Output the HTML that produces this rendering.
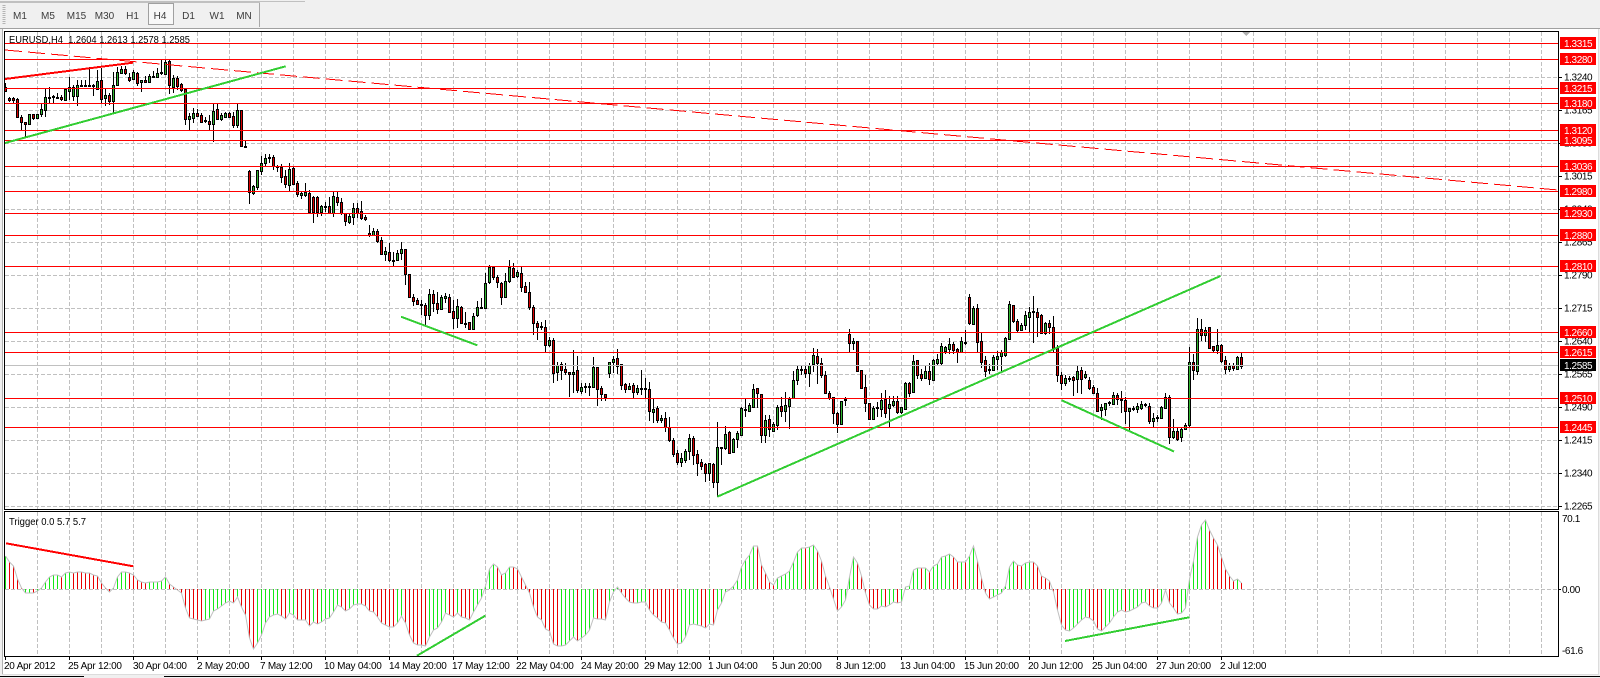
<!DOCTYPE html>
<html><head><meta charset="utf-8"><title>EURUSD,H4</title>
<style>
html,body{margin:0;padding:0;background:#f0f0f0;width:1600px;height:678px;overflow:hidden}
svg{position:absolute;left:0;top:0;display:block;shape-rendering:crispEdges}
text{font-family:"Liberation Sans",sans-serif;font-size:10px;fill:#000}
.t text{fill:#3c3c3c;text-anchor:middle}
.a text{letter-spacing:-.4px}
.l text{fill:#fff;letter-spacing:-.4px}
.b text{letter-spacing:-.25px}
</style></head><body>
<svg width="1600" height="678" viewBox="0 0 1600 678" xmlns="http://www.w3.org/2000/svg">
<rect width="1600" height="678" fill="#f0f0f0"/>
<path d="M0 1.5H305M0 2.5H260" stroke="#c0c0c0" fill="none"/>
<path d="M259.5 3V27" stroke="#a8a8a8" fill="none"/>
<path d="M4 5V24" stroke="#b4b4b4" stroke-width="3" stroke-dasharray="1 1" fill="none"/>
<rect x="148.5" y="3.5" width="25" height="21" fill="#f8f8f8" stroke="#a0a0a0"/>
<g class="t">
<text x="20" y="19">M1</text><text x="48" y="19">M5</text><text x="76.500" y="19">M15</text><text x="104.500" y="19">M30</text><text x="132.500" y="19">H1</text><text x="160" y="19">H4</text><text x="188.500" y="19">D1</text><text x="217" y="19">W1</text><text x="244" y="19">MN</text>
</g>
<rect x="0" y="28" width="1600" height="1" fill="#a0a0a0"/>
<rect x="2" y="29" width="1597" height="646" fill="#fff"/>
<rect x="2" y="29" width="1" height="646" fill="#b0b0b0"/>
<rect x="2" y="674" width="1597" height="1" fill="#dcdcdc"/>
<rect x="1598" y="29" width="1" height="646" fill="#dcdcdc"/>
<path d="M0 676.500H84M164 676.500H1600" stroke="#000" fill="none"/>

<path fill="none" stroke="#c0c0c0" stroke-dasharray="4 2" d="M5 77.500H1558M5 110.500H1558M5 143.500H1558M5 176.500H1558M5 209.500H1558M5 242.500H1558M5 275.500H1558M5 308.500H1558M5 341.500H1558M5 374.500H1558M5 407.500H1558M5 440.500H1558M5 473.500H1558M5 506.500H1558M5 589.500H1558
M37.500 32V509M69.500 32V509M101.500 32V509M133.500 32V509M165.500 32V509M197.500 32V509M229.500 32V509M261.500 32V509M293.500 32V509M325.500 32V509M357.500 32V509M389.500 32V509M421.500 32V509M453.500 32V509M485.500 32V509M517.500 32V509M549.500 32V509M581.500 32V509M613.500 32V509M645.500 32V509M677.500 32V509M709.500 32V509M741.500 32V509M773.500 32V509M805.500 32V509M837.500 32V509M869.500 32V509M901.500 32V509M933.500 32V509M965.500 32V509M997.500 32V509M1029.500 32V509M1061.500 32V509M1093.500 32V509M1125.500 32V509M1157.500 32V509M1189.500 32V509M1221.500 32V509M1253.500 32V509M1285.500 32V509M1317.500 32V509M1349.500 32V509M1381.500 32V509M1413.500 32V509M1445.500 32V509M1477.500 32V509M1509.500 32V509M1541.500 32V509
M37.500 512V656M69.500 512V656M101.500 512V656M133.500 512V656M165.500 512V656M197.500 512V656M229.500 512V656M261.500 512V656M293.500 512V656M325.500 512V656M357.500 512V656M389.500 512V656M421.500 512V656M453.500 512V656M485.500 512V656M517.500 512V656M549.500 512V656M581.500 512V656M613.500 512V656M645.500 512V656M677.500 512V656M709.500 512V656M741.500 512V656M773.500 512V656M805.500 512V656M837.500 512V656M869.500 512V656M901.500 512V656M933.500 512V656M965.500 512V656M997.500 512V656M1029.500 512V656M1061.500 512V656M1093.500 512V656M1125.500 512V656M1157.500 512V656M1189.500 512V656M1221.500 512V656M1253.500 512V656M1285.500 512V656M1317.500 512V656M1349.500 512V656M1381.500 512V656M1413.500 512V656M1445.500 512V656M1477.500 512V656M1509.500 512V656M1541.500 512V656"/>

<path fill="none" stroke="#000" d="M5.500 83V92M9.500 97V102M13.500 97V103M17.500 98V118M21.500 115V130M25.500 122V137M29.500 114V124M33.500 114V120M37.500 114V119M41.500 103V117M45.500 88V117M49.500 87V103M53.500 95V103M57.500 93V99M61.500 95V101M65.500 88V101M69.500 77V100M73.500 85V101M77.500 80V106M81.500 80V87M85.500 80V87M89.500 67V86M93.500 84V96M97.500 70V90M101.500 68V103M105.500 88V106M109.500 93V105M113.500 72V113M117.500 67V86M121.500 66V74M125.500 66V75M129.500 73V82M133.500 70V80M137.500 72V86M141.500 80V92M145.500 76V83M149.500 74V83M153.500 71V78M157.500 68V78M161.500 60V75M165.500 59V75M169.500 59V94M173.500 75V93M177.500 76V90M181.500 83V92M185.500 88V125M189.500 113V130M193.500 108V123M197.500 109V117M201.500 113V123M205.500 117V123M209.500 115V130M213.500 104V142M217.500 104V120M221.500 113V121M225.500 112V117M229.500 112V118M233.500 112V128M237.500 104V128M241.500 110V147M245.500 141V147
M249.500 170V204M253.500 185V195M257.500 170V190M261.500 156V175M265.500 154V166M269.500 154V163M273.500 155V170M277.500 165V172M281.500 164V183M285.500 170V188M289.500 163V191M293.500 166V185M297.500 181V197M301.500 192V199M305.500 183V197M309.500 190V214M313.500 196V223M317.500 196V217M321.500 205V216M325.500 202V212M329.500 197V214M333.500 192V217M337.500 192V206M341.500 198V215M345.500 213V226M349.500 214V224M353.500 203V225M357.500 203V218M361.500 201V220M365.500 215V221M369.500 225V237M373.500 228V236M377.500 229V243M381.500 237V255M385.500 247V261M389.500 243V262M393.500 252V266M397.500 250V261M401.500 242V260M405.500 249V285M409.500 274V298M413.500 294V306M417.500 298V305M421.500 300V315M425.500 303V325M429.500 289V320M433.500 290V312M437.500 292V314M441.500 295V310M445.500 293V303M449.500 294V313M453.500 300V329M457.500 299V328M461.500 306V324M465.500 312V328M469.500 322V330M473.500 313V330M477.500 301V317M481.500 298V308M485.500 273V308M489.500 265V284M493.500 267V280M497.500 275V288M501.500 282V305M505.500 273V298M509.500 260V283M513.500 263V277M517.500 270V278M521.500 267V292M525.500 282V292M529.500 282V310M533.500 305V335M537.500 321V340M541.500 322V330M545.500 320V352M549.500 337V347M553.500 338V383M557.500 362V381M561.500 362V380M565.500 363V375M569.500 372V397M573.500 350V393M577.500 356V393M581.500 383V394M585.500 383V393M589.500 383V396M593.500 357V387M597.500 367V406M601.500 386V401M605.500 394V401M609.500 362V378M613.500 356V373M617.500 349V374
M621.500 364V390M625.500 383V393M629.500 383V390M633.500 383V399M637.500 385V395M641.500 370V395M645.500 378V398M649.500 382V421M653.500 398V423M657.500 406V423M661.500 415V423M665.500 412V432M669.500 417V442M673.500 438V457M677.500 450V465M681.500 453V467M685.500 449V463M689.500 434V460M693.500 436V465M697.500 450V476M701.500 459V470M705.500 463V482M709.500 463V481M713.500 463V488M717.500 422V497M721.500 447V465M725.500 426V450M729.500 431V454M733.500 438V453M737.500 431V448M741.500 407V435M745.500 399V417M749.500 403V412M753.500 384V407M757.500 388V408M761.500 394V443M765.500 415V443M769.500 415V437M773.500 422V431M777.500 405V430M781.500 397V417M785.500 392V422M789.500 397V429M793.500 371V398M797.500 366V385M801.500 366V375M805.500 366V378M809.500 363V387M813.500 348V372M817.500 349V384M821.500 358V378M825.500 371V394M829.500 391V400M833.500 397V424M837.500 412V433M841.500 401V425M845.500 397V406M849.500 329V352M853.500 338V350M857.500 341V372M861.500 370V389M865.500 375V412M869.500 403V420M873.500 406V419M877.500 402V417M881.500 393V417M885.500 390V418M889.500 396V428M893.500 396V407M897.500 396V414
M901.500 407V414M905.500 382V409M909.500 382V397M913.500 355V393M917.500 360V379M921.500 369V381M925.500 365V379M929.500 363V385M933.500 359V381M937.500 354V366M941.500 343V365M945.500 346V354M949.500 338V354M953.500 342V354M957.500 348V363M961.500 337V353M965.500 330V345M969.500 294V325M973.500 306V325M977.500 304V353M981.500 333V368M985.500 356V377M989.500 364V374M993.500 355V370M997.500 351V370M1001.500 350V373M1005.500 337V357M1009.500 301V340M1013.500 305V323M1017.500 319V332M1021.500 323V331M1025.500 311V330M1029.500 307V332M1033.500 296V343M1037.500 308V337M1041.500 314V333M1045.500 322V335M1049.500 320V334M1053.500 316V353M1057.500 345V382M1061.500 372V390M1065.500 375V386M1069.500 376V382M1073.500 376V396M1077.500 366V393M1081.500 367V394M1085.500 371V379M1089.500 377V390M1093.500 385V393M1097.500 388V412M1101.500 404V420M1105.500 403V416M1109.500 401V406M1113.500 392V405M1117.500 393V405M1121.500 391V413M1125.500 397V424M1129.500 408V430M1133.500 406V411M1137.500 403V413M1141.500 401V410M1145.500 403V407M1149.500 403V424M1153.500 413V427M1157.500 415V422M1161.500 406V418M1165.500 393V408M1169.500 395V444M1173.500 419V439M1177.500 428V441M1181.500 427V442M1185.500 423V430M1189.500 347V427M1193.500 354V380M1197.500 318V375M1201.500 319V341M1205.500 327V342M1209.500 327V348M1213.500 346V352M1217.500 329V354M1221.500 344V363M1225.500 356V374M1229.500 363V372M1233.500 363V371M1237.500 356V369M1241.500 353V369"/>

<path fill="#2fb52f" stroke="#000" d="M28.500 114.500h2v10h-2zM36.500 114.500h2v4h-2zM40.500 109.500h2v5h-2zM44.500 97.500h2v13h-2zM48.500 97.500h2v1h-2zM52.500 96.500h2v1h-2zM56.500 97.500h2v1h-2zM64.500 89.500h2v11h-2zM68.500 87.500h2v4h-2zM72.500 87.500h2v9h-2zM76.500 85.500h2v11h-2zM80.500 85.500h2v1h-2zM84.500 85.500h2v1h-2zM88.500 85.500h2v1h-2zM96.500 81.500h2v8h-2zM104.500 95.500h2v3h-2zM112.500 85.500h2v16h-2zM116.500 72.500h2v13h-2zM120.500 69.500h2v4h-2zM132.500 72.500h2v7h-2zM140.500 80.500h2v2h-2zM148.500 76.500h2v6h-2zM152.500 76.500h2v1h-2zM156.500 73.500h2v4h-2zM160.500 72.500h2v1h-2zM164.500 62.500h2v12h-2zM172.500 78.500h2v9h-2zM188.500 116.500h2v3h-2zM192.500 113.500h2v5h-2zM204.500 120.500h2v1h-2zM212.500 111.500h2v13h-2zM220.500 115.500h2v4h-2zM224.500 113.500h2v4h-2zM236.500 110.500h2v15h-2zM244.500 146.500h2v1h-2z
M252.500 186.500h2v7h-2zM256.500 170.500h2v17h-2zM260.500 163.500h2v8h-2zM264.500 158.500h2v5h-2zM268.500 157.500h2v1h-2zM276.500 166.500h2v1h-2zM288.500 169.500h2v16h-2zM300.500 193.500h2v2h-2zM304.500 192.500h2v3h-2zM320.500 206.500h2v6h-2zM324.500 206.500h2v1h-2zM332.500 196.500h2v17h-2zM348.500 216.500h2v6h-2zM352.500 208.500h2v9h-2zM372.500 231.500h2v4h-2zM384.500 251.500h2v3h-2zM392.500 260.500h2v1h-2zM396.500 253.500h2v7h-2zM400.500 249.500h2v4h-2zM428.500 294.500h2v21h-2zM440.500 297.500h2v12h-2zM444.500 296.500h2v2h-2zM456.500 306.500h2v12h-2zM464.500 323.500h2v1h-2zM472.500 316.500h2v13h-2zM476.500 307.500h2v8h-2zM480.500 307.500h2v1h-2zM484.500 283.500h2v25h-2zM488.500 267.500h2v15h-2zM504.500 281.500h2v16h-2zM508.500 267.500h2v14h-2zM516.500 272.500h2v4h-2zM540.500 326.500h2v1h-2zM548.500 340.500h2v5h-2zM556.500 365.500h2v7h-2zM572.500 372.500h2v2h-2zM580.500 387.500h2v4h-2zM584.500 386.500h2v1h-2zM588.500 386.500h2v1h-2zM592.500 367.500h2v20h-2zM608.500 362.500h2v11h-2zM612.500 359.500h2v3h-2z
M628.500 386.500h2v3h-2zM636.500 388.500h2v4h-2zM640.500 388.500h2v1h-2zM644.500 388.500h2v1h-2zM652.500 409.500h2v3h-2zM660.500 418.500h2v2h-2zM680.500 458.500h2v4h-2zM684.500 451.500h2v9h-2zM688.500 438.500h2v13h-2zM708.500 463.500h2v10h-2zM716.500 447.500h2v35h-2zM720.500 447.500h2v1h-2zM724.500 434.500h2v14h-2zM732.500 439.500h2v13h-2zM736.500 433.500h2v6h-2zM740.500 408.500h2v27h-2zM744.500 409.500h2v1h-2zM748.500 405.500h2v6h-2zM752.500 389.500h2v18h-2zM764.500 420.500h2v15h-2zM772.500 424.500h2v7h-2zM776.500 407.500h2v18h-2zM784.500 405.500h2v6h-2zM788.500 399.500h2v7h-2zM792.500 380.500h2v18h-2zM796.500 369.500h2v11h-2zM800.500 369.500h2v1h-2zM808.500 365.500h2v8h-2zM812.500 355.500h2v9h-2zM840.500 401.500h2v23h-2zM844.500 399.500h2v1h-2zM852.500 341.500h2v2h-2zM872.500 408.500h2v11h-2zM876.500 407.500h2v1h-2zM880.500 400.500h2v9h-2zM888.500 404.500h2v4h-2zM892.500 401.500h2v4h-2z
M900.500 407.500h2v5h-2zM904.500 383.500h2v26h-2zM912.500 361.500h2v31h-2zM924.500 371.500h2v7h-2zM932.500 360.500h2v20h-2zM936.500 359.500h2v4h-2zM940.500 346.500h2v17h-2zM944.500 347.500h2v4h-2zM948.500 344.500h2v5h-2zM960.500 341.500h2v11h-2zM964.500 342.500h2v1h-2zM972.500 308.500h2v16h-2zM988.500 369.500h2v1h-2zM992.500 357.500h2v13h-2zM996.500 356.500h2v3h-2zM1000.500 352.500h2v4h-2zM1004.500 338.500h2v17h-2zM1008.500 304.500h2v35h-2zM1020.500 325.500h2v5h-2zM1024.500 315.500h2v10h-2zM1028.500 312.500h2v5h-2zM1032.500 311.500h2v1h-2zM1044.500 323.500h2v10h-2zM1064.500 378.500h2v5h-2zM1068.500 378.500h2v1h-2zM1076.500 371.500h2v8h-2zM1084.500 374.500h2v3h-2zM1100.500 407.500h2v3h-2zM1104.500 403.500h2v6h-2zM1108.500 402.500h2v1h-2zM1112.500 395.500h2v9h-2zM1128.500 408.500h2v3h-2zM1132.500 408.500h2v1h-2zM1136.500 406.500h2v3h-2zM1140.500 404.500h2v4h-2zM1144.500 404.500h2v1h-2zM1152.500 418.500h2v3h-2zM1156.500 417.500h2v1h-2zM1160.500 407.500h2v11h-2zM1164.500 397.500h2v11h-2zM1172.500 431.500h2v6h-2zM1180.500 429.500h2v8h-2zM1184.500 425.500h2v4h-2zM1188.500 362.500h2v63h-2zM1196.500 329.500h2v42h-2zM1204.500 330.500h2v5h-2zM1216.500 345.500h2v5h-2zM1228.500 366.500h2v3h-2zM1236.500 357.500h2v12h-2z"/>

<path fill="#d80000" stroke="#000" d="M4.500 87.500h2v4h-2zM8.500 98.500h2v2h-2zM12.500 98.500h2v2h-2zM16.500 99.500h2v18h-2zM20.500 117.500h2v5h-2zM24.500 122.500h2v2h-2zM32.500 114.500h2v4h-2zM60.500 97.500h2v2h-2zM92.500 85.500h2v1h-2zM100.500 80.500h2v19h-2zM108.500 95.500h2v6h-2zM124.500 69.500h2v4h-2zM128.500 77.500h2v3h-2zM136.500 73.500h2v10h-2zM144.500 80.500h2v2h-2zM168.500 61.500h2v24h-2zM176.500 78.500h2v8h-2zM180.500 84.500h2v6h-2zM184.500 89.500h2v30h-2zM196.500 113.500h2v3h-2zM200.500 115.500h2v7h-2zM208.500 121.500h2v3h-2zM216.500 109.500h2v10h-2zM228.500 113.500h2v4h-2zM232.500 116.500h2v9h-2zM240.500 110.500h2v36h-2z
M248.500 171.500h2v21h-2zM272.500 157.500h2v9h-2zM280.500 167.500h2v10h-2zM284.500 176.500h2v8h-2zM292.500 168.500h2v16h-2zM296.500 183.500h2v11h-2zM308.500 193.500h2v19h-2zM312.500 197.500h2v15h-2zM316.500 197.500h2v15h-2zM328.500 206.500h2v7h-2zM336.500 197.500h2v5h-2zM340.500 202.500h2v11h-2zM344.500 213.500h2v8h-2zM356.500 208.500h2v5h-2zM360.500 211.500h2v7h-2zM364.500 217.500h2v2h-2zM368.500 233.500h2v2h-2zM376.500 231.500h2v10h-2zM380.500 240.500h2v14h-2zM388.500 252.500h2v8h-2zM404.500 249.500h2v25h-2zM408.500 274.500h2v23h-2zM412.500 297.500h2v4h-2zM416.500 300.500h2v4h-2zM420.500 304.500h2v1h-2zM424.500 305.500h2v10h-2zM432.500 294.500h2v9h-2zM436.500 303.500h2v6h-2zM448.500 297.500h2v15h-2zM452.500 311.500h2v7h-2zM460.500 307.500h2v16h-2zM468.500 322.500h2v7h-2zM492.500 267.500h2v10h-2zM496.500 277.500h2v5h-2zM500.500 283.500h2v14h-2zM512.500 268.500h2v9h-2zM520.500 273.500h2v14h-2zM524.500 286.500h2v6h-2zM528.500 292.500h2v15h-2zM532.500 307.500h2v16h-2zM536.500 323.500h2v4h-2zM544.500 327.500h2v18h-2zM552.500 340.500h2v33h-2zM560.500 364.500h2v6h-2zM564.500 369.500h2v3h-2zM568.500 372.500h2v2h-2zM576.500 370.500h2v20h-2zM596.500 367.500h2v22h-2zM600.500 388.500h2v6h-2zM604.500 394.500h2v3h-2zM616.500 358.500h2v8h-2z
M620.500 364.500h2v21h-2zM624.500 384.500h2v5h-2zM632.500 385.500h2v7h-2zM648.500 389.500h2v22h-2zM656.500 408.500h2v12h-2zM664.500 418.500h2v9h-2zM668.500 427.500h2v13h-2zM672.500 440.500h2v14h-2zM676.500 453.500h2v9h-2zM692.500 438.500h2v17h-2zM696.500 454.500h2v9h-2zM700.500 462.500h2v4h-2zM704.500 464.500h2v9h-2zM712.500 464.500h2v18h-2zM728.500 432.500h2v21h-2zM756.500 388.500h2v5h-2zM760.500 394.500h2v41h-2zM768.500 419.500h2v10h-2zM780.500 406.500h2v5h-2zM804.500 369.500h2v4h-2zM816.500 356.500h2v7h-2zM820.500 363.500h2v12h-2zM824.500 375.500h2v18h-2zM828.500 393.500h2v5h-2zM832.500 397.500h2v16h-2zM836.500 413.500h2v11h-2zM848.500 334.500h2v9h-2zM856.500 341.500h2v30h-2zM860.500 370.500h2v18h-2zM864.500 387.500h2v16h-2zM868.500 403.500h2v16h-2zM884.500 399.500h2v14h-2zM896.500 401.500h2v11h-2z
M908.500 383.500h2v10h-2zM916.500 360.500h2v15h-2zM920.500 374.500h2v4h-2zM928.500 371.500h2v8h-2zM952.500 344.500h2v6h-2zM956.500 349.500h2v3h-2zM968.500 297.500h2v26h-2zM976.500 308.500h2v34h-2zM980.500 341.500h2v21h-2zM984.500 360.500h2v11h-2zM1012.500 305.500h2v16h-2zM1016.500 321.500h2v9h-2zM1036.500 312.500h2v5h-2zM1040.500 315.500h2v18h-2zM1048.500 323.500h2v4h-2zM1052.500 327.500h2v21h-2zM1056.500 348.500h2v27h-2zM1060.500 375.500h2v8h-2zM1072.500 377.500h2v3h-2zM1080.500 370.500h2v9h-2zM1088.500 380.500h2v8h-2zM1092.500 387.500h2v6h-2zM1096.500 393.500h2v18h-2zM1116.500 395.500h2v4h-2zM1120.500 399.500h2v1h-2zM1124.500 400.500h2v11h-2zM1148.500 406.500h2v15h-2zM1168.500 397.500h2v40h-2zM1176.500 431.500h2v8h-2zM1192.500 362.500h2v8h-2zM1200.500 329.500h2v6h-2zM1208.500 327.500h2v21h-2zM1212.500 346.500h2v4h-2zM1220.500 345.500h2v16h-2zM1224.500 360.500h2v9h-2zM1232.500 365.500h2v3h-2zM1240.500 357.500h2v9h-2z"/>

<path fill="none" stroke="#16e816" d="M5.500 589V556M25.500 589V593M29.500 589V593M37.500 589V591M41.500 589V588M45.500 589V582M49.500 589V577M53.500 589V575M57.500 589V575M65.500 589V573M69.500 589V572M113.500 589V588M117.500 589V577M121.500 589V572M125.500 589V572M149.500 589V582M153.500 589V582M157.500 589V582M161.500 589V581M165.500 589V577M205.500 589V620M209.500 589V619M213.500 589V611M217.500 589V609M221.500 589V606M225.500 589V603M229.500 589V601M237.500 589V597M257.500 589V643M261.500 589V635M265.500 589V623M269.500 589V617M273.500 589V615M277.500 589V614M289.500 589V613M293.500 589V615M313.500 589V622M321.500 589V622M325.500 589V619M329.500 589V618M333.500 589V612M337.500 589V605M349.500 589V609M353.500 589V605M357.500 589V604M397.500 589V623M401.500 589V616M429.500 589V637M433.500 589V630M437.500 589V628M441.500 589V622M445.500 589V613M457.500 589V613M473.500 589V612M477.500 589V605M481.500 589V598M485.500 589V586M489.500 589V569M493.500 589V564M505.500 589V573M509.500 589V567M561.500 589V646M565.500 589V645M569.500 589V641M573.500 589V637M581.500 589V638M585.500 589V635M589.500 589V630M593.500 589V618M609.500 589V602M613.500 589V592M617.500 589V587M637.500 589V603M641.500 589V602M645.500 589V602M681.500 589V643M685.500 589V637M689.500 589V625M693.500 589V624M697.500 589V625M709.500 589V624M717.500 589V610M721.500 589V603M725.500 589V592M733.500 589V586M737.500 589V580M741.500 589V567M745.500 589V560M749.500 589V555M753.500 589V546M777.500 589V578M781.500 589V576M785.500 589V574M789.500 589V571M793.500 589V562M797.500 589V552M801.500 589V548M809.500 589V547M813.500 589V545M841.500 589V607M845.500 589V600M849.500 589V577M853.500 589V557M881.500 589V606M889.500 589V605M893.500 589V602M901.500 589V602M905.500 589V587M909.500 589V586M913.500 589V570M917.500 589V568M925.500 589V568M933.500 589V566M937.500 589V564M941.500 589V557M945.500 589V556M949.500 589V554M961.500 589V562M969.500 589V556M973.500 589V546M993.500 589V597M997.500 589V595M1001.500 589V593M1005.500 589V586M1009.500 589V567M1013.500 589V561M1025.500 589V563M1029.500 589V562M1069.500 589V631M1073.500 589V628M1077.500 589V624M1081.500 589V620M1085.500 589V617M1105.500 589V627M1109.500 589V623M1113.500 589V617M1117.500 589V612M1121.500 589V610M1129.500 589V611M1133.500 589V609M1137.500 589V607M1141.500 589V603M1145.500 589V602M1161.500 589V603M1165.500 589V590M1181.500 589V613M1185.500 589V608M1189.500 589V579M1193.500 589V561M1197.500 589V537M1201.500 589V525M1205.500 589V520M1237.500 589V579"/>

<path fill="none" stroke="#e80000" d="M9.500 589V562M13.500 589V566M17.500 589V579M21.500 589V588M33.500 589V593M61.500 589V577M73.500 589V573M77.500 589V572M81.500 589V572M85.500 589V573M89.500 589V573M93.500 589V575M97.500 589V576M101.500 589V583M105.500 589V588M109.500 589V592M129.500 589V573M133.500 589V575M137.500 589V580M141.500 589V582M145.500 589V583M169.500 589V584M173.500 589V587M177.500 589V590M181.500 589V593M185.500 589V608M189.500 589V618M193.500 589V619M197.500 589V620M201.500 589V621M233.500 589V603M241.500 589V607M245.500 589V615M249.500 589V638M253.500 589V649M281.500 589V616M285.500 589V619M297.500 589V620M301.500 589V620M305.500 589V620M309.500 589V626M317.500 589V624M341.500 589V607M345.500 589V611M361.500 589V604M365.500 589V606M369.500 589V611M373.500 589V612M377.500 589V617M381.500 589V623M385.500 589V625M389.500 589V627M393.500 589V627M405.500 589V623M409.500 589V635M413.500 589V643M417.500 589V645M421.500 589V645M425.500 589V646M449.500 589V615M453.500 589V617M461.500 589V617M465.500 589V618M469.500 589V620M497.500 589V567M501.500 589V575M513.500 589V567M517.500 589V569M521.500 589V577M525.500 589V585M529.500 589V593M533.500 589V607M537.500 589V617M541.500 589V620M545.500 589V629M549.500 589V631M553.500 589V644M557.500 589V646M577.500 589V641M597.500 589V619M601.500 589V619M605.500 589V620M621.500 589V593M625.500 589V598M629.500 589V602M633.500 589V603M649.500 589V610M653.500 589V615M657.500 589V618M661.500 589V622M665.500 589V623M669.500 589V630M673.500 589V638M677.500 589V644M701.500 589V626M705.500 589V628M713.500 589V625M729.500 589V590M757.500 589V546M761.500 589V565M765.500 589V573M769.500 589V582M773.500 589V585M805.500 589V548M817.500 589V551M821.500 589V561M825.500 589V576M829.500 589V587M833.500 589V599M837.500 589V611M857.500 589V563M861.500 589V576M865.500 589V593M869.500 589V605M873.500 589V609M877.500 589V609M885.500 589V607M897.500 589V603M921.500 589V568M929.500 589V572M953.500 589V557M957.500 589V562M965.500 589V562M977.500 589V561M981.500 589V578M985.500 589V593M989.500 589V599M1017.500 589V565M1021.500 589V566M1033.500 589V562M1037.500 589V566M1041.500 589V576M1045.500 589V578M1049.500 589V581M1053.500 589V592M1057.500 589V610M1061.500 589V625M1065.500 589V630M1089.500 589V618M1093.500 589V621M1097.500 589V629M1101.500 589V631M1125.500 589V612M1149.500 589V606M1153.500 589V608M1157.500 589V608M1169.500 589V603M1173.500 589V608M1177.500 589V614M1209.500 589V530M1213.500 589V538M1217.500 589V545M1221.500 589V557M1225.500 589V569M1229.500 589V576M1233.500 589V581M1241.500 589V583"/>

<polyline fill="none" stroke="#c0c0c0" style="shape-rendering:auto" points="5.500,556 9.500,562 13.500,566 17.500,579 21.500,588 25.500,593 29.500,593 33.500,593 37.500,591 41.500,588 45.500,582 49.500,577 53.500,575 57.500,575 61.500,577 65.500,573 69.500,572 73.500,573 77.500,572 81.500,572 85.500,573 89.500,573 93.500,575 97.500,576 101.500,583 105.500,588 109.500,592 113.500,588 117.500,577 121.500,572 125.500,572 129.500,573 133.500,575 137.500,580 141.500,582 145.500,583 149.500,582 153.500,582 157.500,582 161.500,581 165.500,577 169.500,584 173.500,587 177.500,590 181.500,593 185.500,608 189.500,618 193.500,619 197.500,620 201.500,621 205.500,620 209.500,619 213.500,611 217.500,609 221.500,606 225.500,603 229.500,601 233.500,603 237.500,597 241.500,607 245.500,615 249.500,638 253.500,649 257.500,643 261.500,635 265.500,623 269.500,617 273.500,615 277.500,614 281.500,616 285.500,619 289.500,613 293.500,615 297.500,620 301.500,620 305.500,620 309.500,626 313.500,622 317.500,624 321.500,622 325.500,619 329.500,618 333.500,612 337.500,605 341.500,607 345.500,611 349.500,609 353.500,605 357.500,604 361.500,604 365.500,606 369.500,611 373.500,612 377.500,617 381.500,623 385.500,625 389.500,627 393.500,627 397.500,623 401.500,616 405.500,623 409.500,635 413.500,643 417.500,645 421.500,645 425.500,646 429.500,637 433.500,630 437.500,628 441.500,622 445.500,613 449.500,615 453.500,617 457.500,613 461.500,617 465.500,618 469.500,620 473.500,612 477.500,605 481.500,598 485.500,586 489.500,569 493.500,564 497.500,567 501.500,575 505.500,573 509.500,567 513.500,567 517.500,569 521.500,577 525.500,585 529.500,593 533.500,607 537.500,617 541.500,620 545.500,629 549.500,631 553.500,644 557.500,646 561.500,646 565.500,645 569.500,641 573.500,637 577.500,641 581.500,638 585.500,635 589.500,630 593.500,618 597.500,619 601.500,619 605.500,620 609.500,602 613.500,592 617.500,587 621.500,593 625.500,598 629.500,602 633.500,603 637.500,603 641.500,602 645.500,602 649.500,610 653.500,615 657.500,618 661.500,622 665.500,623 669.500,630 673.500,638 677.500,644 681.500,643 685.500,637 689.500,625 693.500,624 697.500,625 701.500,626 705.500,628 709.500,624 713.500,625 717.500,610 721.500,603 725.500,592 729.500,590 733.500,586 737.500,580 741.500,567 745.500,560 749.500,555 753.500,546 757.500,546 761.500,565 765.500,573 769.500,582 773.500,585 777.500,578 781.500,576 785.500,574 789.500,571 793.500,562 797.500,552 801.500,548 805.500,548 809.500,547 813.500,545 817.500,551 821.500,561 825.500,576 829.500,587 833.500,599 837.500,611 841.500,607 845.500,600 849.500,577 853.500,557 857.500,563 861.500,576 865.500,593 869.500,605 873.500,609 877.500,609 881.500,606 885.500,607 889.500,605 893.500,602 897.500,603 901.500,602 905.500,587 909.500,586 913.500,570 917.500,568 921.500,568 925.500,568 929.500,572 933.500,566 937.500,564 941.500,557 945.500,556 949.500,554 953.500,557 957.500,562 961.500,562 965.500,562 969.500,556 973.500,546 977.500,561 981.500,578 985.500,593 989.500,599 993.500,597 997.500,595 1001.500,593 1005.500,586 1009.500,567 1013.500,561 1017.500,565 1021.500,566 1025.500,563 1029.500,562 1033.500,562 1037.500,566 1041.500,576 1045.500,578 1049.500,581 1053.500,592 1057.500,610 1061.500,625 1065.500,630 1069.500,631 1073.500,628 1077.500,624 1081.500,620 1085.500,617 1089.500,618 1093.500,621 1097.500,629 1101.500,631 1105.500,627 1109.500,623 1113.500,617 1117.500,612 1121.500,610 1125.500,612 1129.500,611 1133.500,609 1137.500,607 1141.500,603 1145.500,602 1149.500,606 1153.500,608 1157.500,608 1161.500,603 1165.500,590 1169.500,603 1173.500,608 1177.500,614 1181.500,613 1185.500,608 1189.500,579 1193.500,561 1197.500,537 1201.500,525 1205.500,520 1209.500,530 1213.500,538 1217.500,545 1221.500,557 1225.500,569 1229.500,576 1233.500,581 1237.500,579 1241.500,583"/>

<path fill="none" stroke="#f00" d="M5 43.500H1558M5 59.500H1558M5 88.500H1558M5 103.500H1558M5 130.500H1558M5 140.500H1558M5 166.500H1558M5 191.500H1558M5 213.500H1558M5 235.500H1558M5 266.500H1558M5 332.500H1558M5 352.500H1558M5 398.500H1558M5 427.500H1558"/>
<path fill="none" stroke="#c0c0c0" d="M5 365.500H1558"/>
<path fill="none" stroke="#f00" stroke-dasharray="17 6" d="M5 50L1558 190"/>
<path fill="none" stroke="#f00" stroke-width="2" d="M5 79L133 62.700M6 543.300L133.300 566.300"/>
<path fill="none" stroke="#32cd32" stroke-width="2" d="M5 143L285.700 66.300M401 316.700L477.300 345.300M717.300 496.700L1220.500 276M1061.700 400.300L1174 451.500M417 655.700L485.300 615.700M1065 641L1189.300 617.300"/>
<polygon points="1241,31 1251,31 1246,36" fill="#b0b0b0"/>

<rect x="4.500" y="31.500" width="1554" height="478" fill="none" stroke="#000"/>
<rect x="4.500" y="511.500" width="1554" height="145" fill="none" stroke="#000"/>
<path fill="none" stroke="#000" d="M1558 77.500h4M1558 110.500h4M1558 143.500h4M1558 176.500h4M1558 209.500h4M1558 242.500h4M1558 275.500h4M1558 308.500h4M1558 341.500h4M1558 374.500h4M1558 407.500h4M1558 440.500h4M1558 473.500h4M1558 506.500h4M1558 589.500h3M5.500 656V660M69.500 656V660M133.500 656V660M197.500 656V660M261.500 656V660M325.500 656V660M389.500 656V660M453.500 656V660M517.500 656V660M581.500 656V660M645.500 656V660M709.500 656V660M773.500 656V660M837.500 656V660M901.500 656V660M965.500 656V660M1029.500 656V660M1093.500 656V660M1157.500 656V660M1221.500 656V660"/>

<text x="9" y="43" textLength="181" lengthAdjust="spacingAndGlyphs" xml:space="preserve">EURUSD,H4  1.2604 1.2613 1.2578 1.2585</text>
<text x="9" y="525" textLength="77" lengthAdjust="spacingAndGlyphs">Trigger 0.0 5.7 5.7</text>

<g class="a">
<text x="1564" y="80.500">1.3240</text><text x="1564" y="113.500">1.3165</text><text x="1564" y="146.500">1.3090</text><text x="1564" y="179.500">1.3015</text><text x="1564" y="212.500">1.2940</text><text x="1564" y="245.500">1.2865</text><text x="1564" y="278.500">1.2790</text><text x="1564" y="311.500">1.2715</text><text x="1564" y="344.500">1.2640</text><text x="1564" y="377.500">1.2565</text><text x="1564" y="410.500">1.2490</text><text x="1564" y="443.500">1.2415</text><text x="1564" y="476.500">1.2340</text><text x="1564" y="509.500">1.2265</text>
<text x="1562" y="522">70.1</text><text x="1562" y="593">0.00</text><text x="1562" y="654">-61.6</text>
</g>

<path fill="#f00" d="M1560 37h36v12h-36zM1560 53h36v12h-36zM1560 82h36v12h-36zM1560 97h36v12h-36zM1560 124h36v12h-36zM1560 134h36v12h-36zM1560 160h36v12h-36zM1560 185h36v12h-36zM1560 207h36v12h-36zM1560 229h36v12h-36zM1560 260h36v12h-36zM1560 326h36v12h-36zM1560 346h36v12h-36zM1560 392h36v12h-36zM1560 421h36v12h-36z"/>
<rect x="1560" y="359" width="36" height="12" fill="#000"/>
<g class="l">
<text x="1564" y="47">1.3315</text><text x="1564" y="63">1.3280</text><text x="1564" y="92">1.3215</text><text x="1564" y="107">1.3180</text><text x="1564" y="134">1.3120</text><text x="1564" y="144">1.3095</text><text x="1564" y="170">1.3036</text><text x="1564" y="195">1.2980</text><text x="1564" y="217">1.2930</text><text x="1564" y="239">1.2880</text><text x="1564" y="270">1.2810</text><text x="1564" y="336">1.2660</text><text x="1564" y="356">1.2615</text><text x="1564" y="369">1.2585</text><text x="1564" y="402">1.2510</text><text x="1564" y="431">1.2445</text>
</g>

<g class="b">
<text x="4" y="669">20 Apr 2012</text><text x="68" y="669">25 Apr 12:00</text><text x="133" y="669">30 Apr 04:00</text><text x="197" y="669">2 May 20:00</text><text x="260" y="669">7 May 12:00</text><text x="324" y="669">10 May 04:00</text><text x="389" y="669">14 May 20:00</text><text x="452" y="669">17 May 12:00</text><text x="516" y="669">22 May 04:00</text><text x="581" y="669">24 May 20:00</text><text x="644" y="669">29 May 12:00</text><text x="708" y="669">1 Jun 04:00</text><text x="772" y="669">5 Jun 20:00</text><text x="836" y="669">8 Jun 12:00</text><text x="900" y="669">13 Jun 04:00</text><text x="964" y="669">15 Jun 20:00</text><text x="1028" y="669">20 Jun 12:00</text><text x="1092" y="669">25 Jun 04:00</text><text x="1156" y="669">27 Jun 20:00</text><text x="1220" y="669">2 Jul 12:00</text>
</g>
</svg>
</body></html>
